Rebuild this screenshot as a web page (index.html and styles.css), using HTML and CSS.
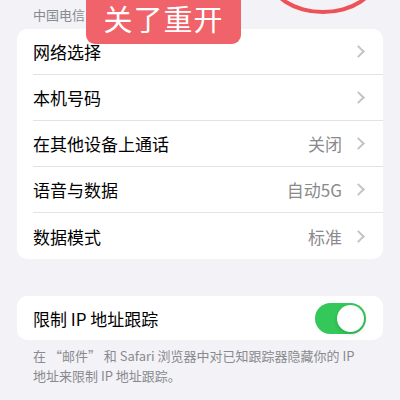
FILE: index.html
```html
<!DOCTYPE html>
<html lang="zh-CN">
<head>
    <meta charset="UTF-8">
    <meta name="viewport" content="width=device-width, initial-scale=1.0">
    <title>蜂窝网络</title>
    <link rel="stylesheet" href="styles.css">
</head>
<body>
    <div class="page">
        <!-- red circle drawn over the screenshot -->
        <div class="mark-circle"></div>
        <div class="mark-label">关了重开</div>

        <div class="carrier">中国电信</div>

        <div class="card">
            <div class="row">
                <span class="title">网络选择</span>
                <span class="chevron"></span>
            </div>
            <div class="row">
                <span class="title">本机号码</span>
                <span class="chevron"></span>
            </div>
            <div class="row">
                <span class="title">在其他设备上通话</span>
                <span class="value">关闭</span>
                <span class="chevron"></span>
            </div>
            <div class="row">
                <span class="title">语音与数据</span>
                <span class="value">自动5G</span>
                <span class="chevron"></span>
            </div>
            <div class="row">
                <span class="title">数据模式</span>
                <span class="value">标准</span>
                <span class="chevron"></span>
            </div>
        </div>

        <div class="card card-single">
            <div class="row">
                <span class="title">限制 IP 地址跟踪</span>
                <span class="toggle on"><span class="knob"></span></span>
            </div>
        </div>

        <p class="note">在 “邮件” 和 Safari 浏览器中对已知跟踪器隐藏你的 IP<br>地址来限制 IP 地址跟踪。</p>
    </div>
</body>
</html>
```

FILE: styles.css
```css
body {
    margin: 0;
    padding: 0;
    background-color: #f2f2f7;
    font-family: "Noto Sans CJK SC", sans-serif;
    color: #000;
}

.page {
    position: relative;
    width: 400px;
    height: 400px;
    overflow: hidden;
}

.carrier {
    height: 29px;
    padding-left: 33px;
    font-size: 13px;
    line-height: 29px;
    color: #8a8a8e;
}

.mark-circle {
    position: absolute;
    left: 268px;
    top: -60px;
    width: 102px;
    height: 66px;
    border: 4px solid #ec5258;
    border-radius: 50%;
}

.mark-label {
    position: absolute;
    left: 86px;
    top: 0;
    width: 155px;
    height: 44px;
    padding-bottom: 7px;
    box-sizing: border-box;
    display: flex;
    align-items: center;
    justify-content: center;
    background-color: #f0636a;
    border-radius: 0 0 9px 9px;
    color: #fff;
    font-size: 29px;
    line-height: 1;
    letter-spacing: 1px;
}

.card {
    margin: 0 17px;
    background-color: #fff;
    border-radius: 10px;
}

.card-single {
    margin-top: 37px;
}

.row {
    display: flex;
    align-items: center;
    height: 46px;
    margin-left: 16px;
    padding-right: 17px;
    font-size: 17px;
    border-bottom: 1px solid #e3e3e6;
    box-sizing: border-box;
}

.card .row:last-child {
    border-bottom: none;
}

.card-single .row {
    height: 44px;
}

.title {
    flex: 1;
}

.value {
    color: #8a8a8e;
    margin-right: 12px;
}

.chevron {
    width: 7px;
    height: 7px;
    border-top: 2px solid #c4c4c7;
    border-right: 2px solid #c4c4c7;
    transform: rotate(45deg);
    margin-right: 3px;
}

.toggle {
    position: relative;
    width: 51px;
    height: 31px;
    border-radius: 16px;
    background-color: #e9e9eb;
}

.toggle.on {
    background-color: #34c759;
}

.knob {
    position: absolute;
    top: 2px;
    left: 2px;
    width: 27px;
    height: 27px;
    border-radius: 50%;
    background-color: #fff;
    box-shadow: 0 2px 4px rgba(0, 0, 0, 0.15);
}

.toggle.on .knob {
    left: 22px;
}

.note {
    margin: 6px 0 0;
    padding: 0 20px 0 33px;
    font-size: 13px;
    line-height: 20px;
    color: #8a8a8e;
}
```
